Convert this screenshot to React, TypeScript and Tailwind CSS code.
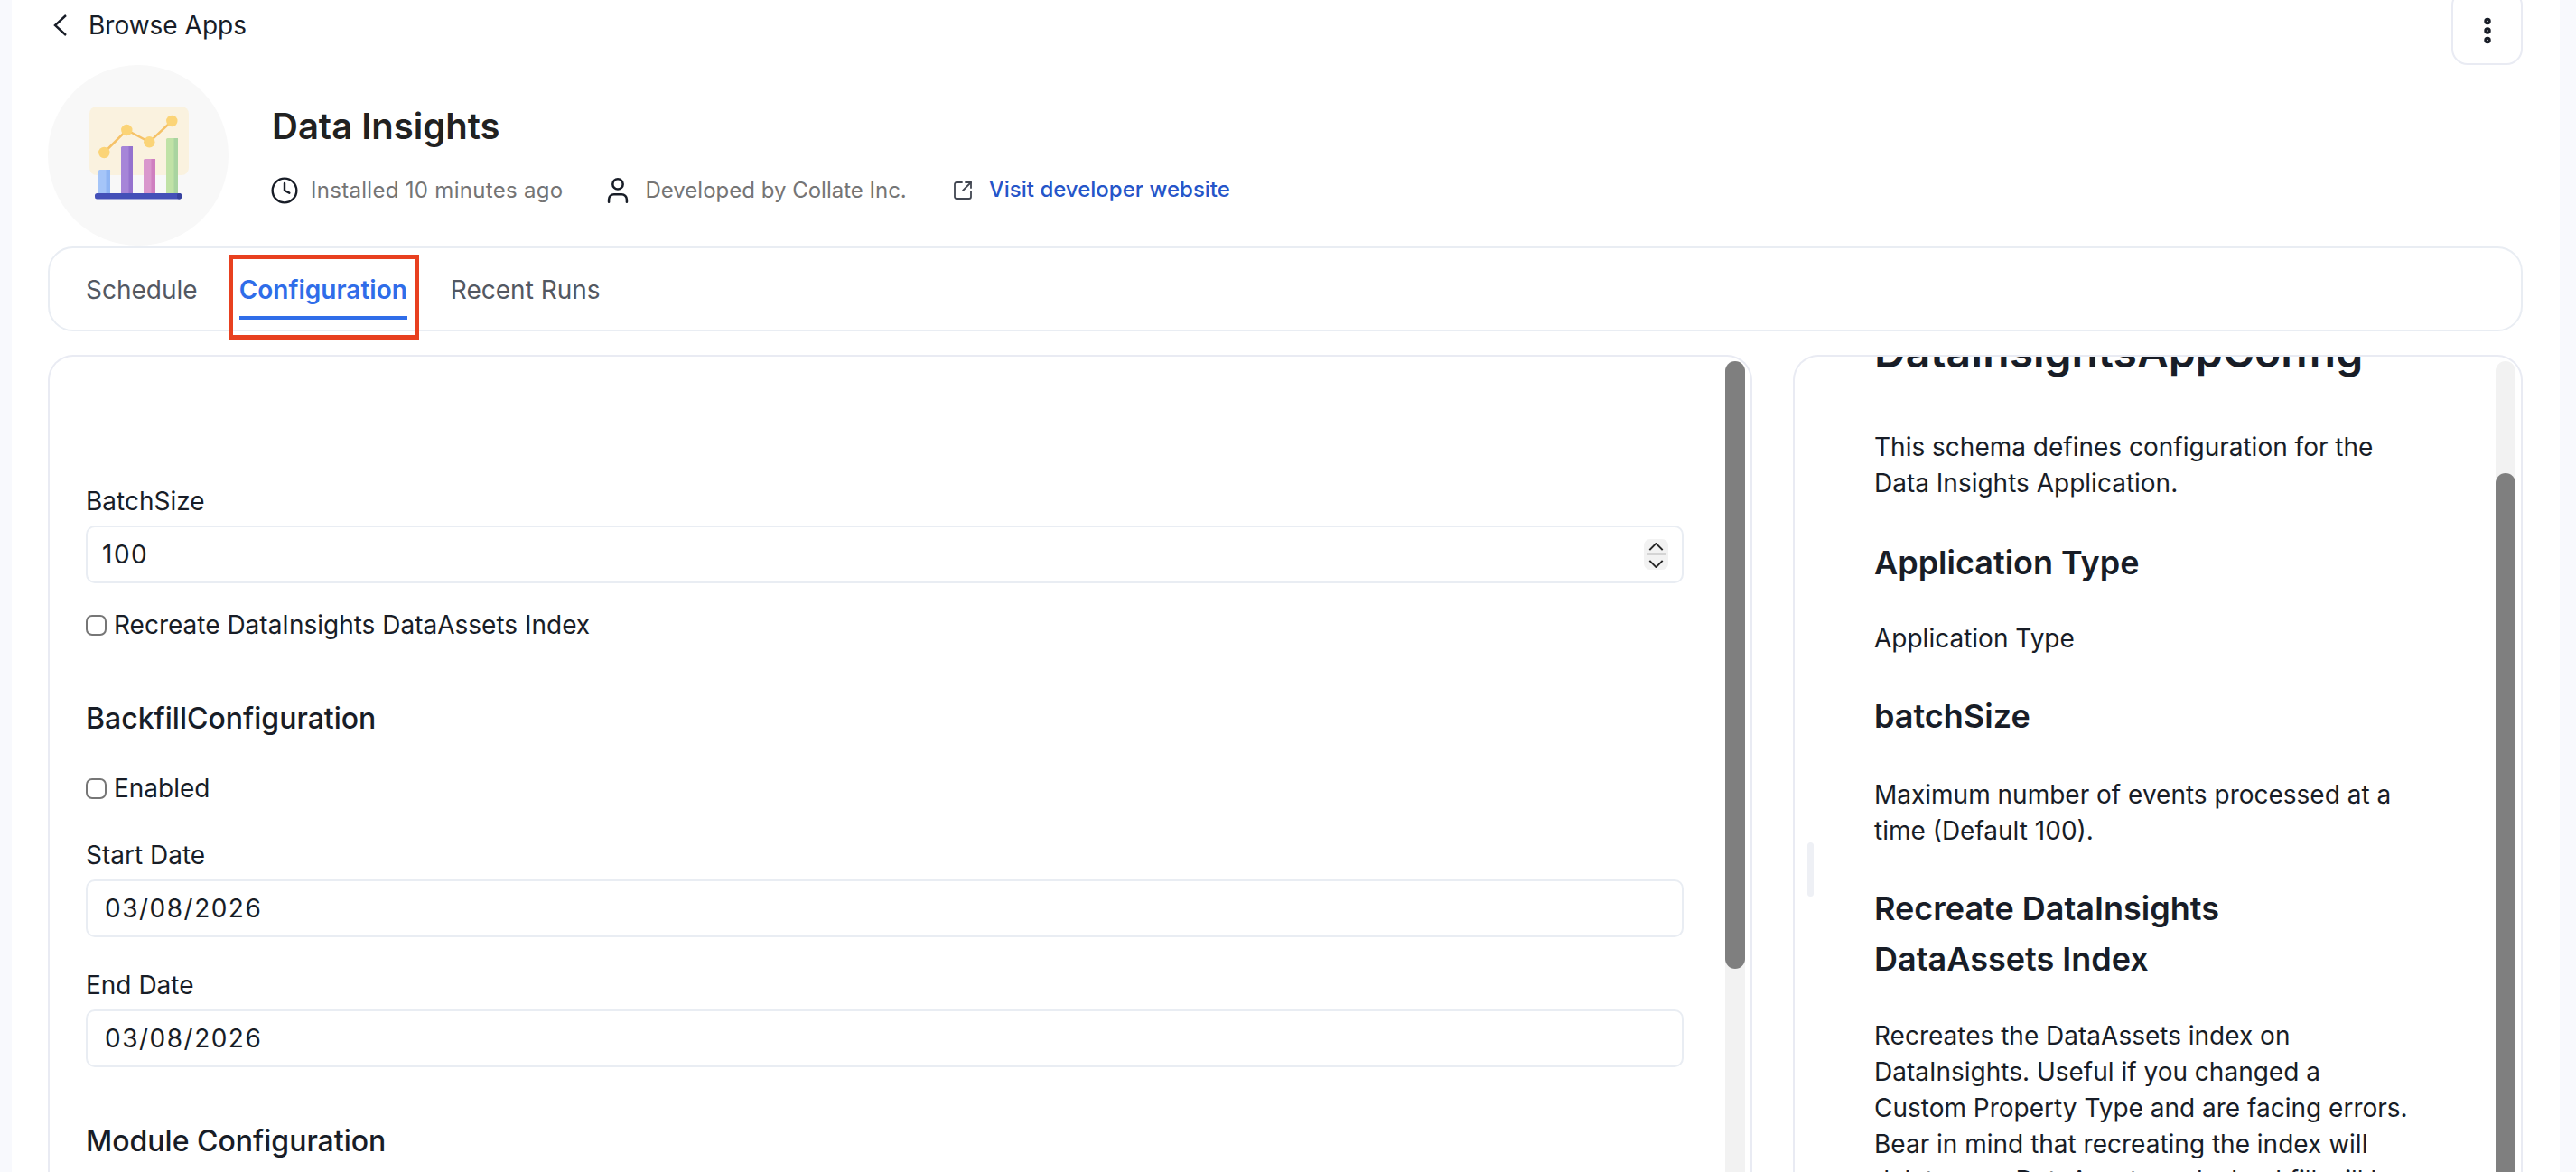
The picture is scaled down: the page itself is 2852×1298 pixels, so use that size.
import { Clock, EllipsisVertical, SquareArrowOutUpRight, User } from 'lucide-react'

const tabBase = 'relative flex h-full items-center pt-[2px] text-[28px] leading-[40px]'

const AppLogo = () => (
  <svg viewBox="0 0 200 200" className="h-[200px] w-[200px] shrink-0 rounded-full bg-[#f8f8f8]">
    <rect x="46" y="46" width="110" height="76" rx="8" fill="#faf2df" />
    <rect x="56" y="116" width="13" height="28" rx="1.5" fill="#a5c5f8" />
    <rect x="64.5" y="116" width="4.5" height="28" fill="#8fb5f3" />
    <rect x="81" y="90" width="13" height="54" rx="1.5" fill="#a685d8" />
    <rect x="89.5" y="90" width="4.5" height="54" fill="#9572ce" />
    <rect x="106" y="104" width="13" height="40" rx="1.5" fill="#d997cd" />
    <rect x="114.5" y="104" width="4.5" height="40" fill="#cf7fc0" />
    <rect x="131" y="81" width="13" height="63" rx="1.5" fill="#c0e2a6" />
    <rect x="139.5" y="81" width="4.5" height="63" fill="#a9d4a0" />
    <rect x="52" y="142" width="96" height="6.5" rx="2.5" fill="#4450b8" />
    <rect x="143" y="142" width="5" height="6.5" rx="2" fill="#37429f" />
    <polyline points="62.3,97 87.3,72 112.3,85.3 137.3,62" fill="none" stroke="#f5c268" strokeWidth="2.5" />
    <circle cx="62.3" cy="97" r="6.2" fill="#fbd477" />
    <circle cx="87.3" cy="72" r="6.2" fill="#fbd477" />
    <circle cx="112.3" cy="85.3" r="6.2" fill="#fbd477" />
    <circle cx="137.3" cy="62" r="6.2" fill="#fbd477" />
  </svg>
)

const Stepper = () => (
  <span className="flex h-[34px] w-[27px] flex-col items-center rounded-[7px] bg-[#f2f2f2] pt-[4px]">
    <svg viewBox="0 0 18 10" className="h-[9px] w-[17px]" fill="none" stroke="#262626" strokeWidth="2.2">
      <polyline points="1,9 9,1 17,9" />
    </svg>
    <span className="mt-[3px] h-[2px] w-[20px] bg-[#d4d4d4]" />
    <svg viewBox="0 0 18 10" className="mt-[5px] h-[9px] w-[17px]" fill="none" stroke="#262626" strokeWidth="2.2">
      <polyline points="1,1 9,9 17,1" />
    </svg>
  </span>
)

const Field = ({ label, value, stepper, mt }: { label: string; value: string; stepper?: boolean; mt: string }) => (
  <div className={mt}>
    <label className="block pt-[2px] text-[28px] leading-[38px] text-[#181d27]">{label}</label>
    <div className="mt-2 flex h-16 items-center justify-between rounded-[10px] border-2 border-[#e9edf3] bg-white pr-[15px]">
      <span className={`${stepper ? 'pl-[16px]' : 'pl-[19px]'} text-[28px] tracking-[1.5px] text-[#181d27]`}>{value}</span>
      {stepper && <Stepper />}
    </div>
  </div>
)

const Check = ({ label, mt }: { label: string; mt: string }) => (
  <label className={`flex h-10 items-center gap-[8px] text-[28px] text-[#181d27] ${mt}`}>
    <input type="checkbox" className="h-[23px] w-[23px] appearance-none rounded-[7px] border-2 border-[#767676] bg-white" />
    {label}
  </label>
)

const Scrollbar = ({ thumbTop, thumbHeight }: { thumbTop: string; thumbHeight: string }) => (
  <div className="absolute right-[6px] top-[5px] h-[1200px] w-[22px] rounded-t-full bg-[#f2f2f2]">
    <div className={`absolute left-0 w-[22px] rounded-full bg-[#7f7f7f] ${thumbTop} ${thumbHeight}`} />
  </div>
)

export default function App() {
  return (
    <div className="h-[1298px] overflow-hidden bg-[#f8f9fd] pl-[13px] pr-[18px] font-['Inter',sans-serif]">
      <div className="h-full bg-white pl-[40px] pr-[41px]">
        <div className="flex h-[72px] items-start justify-between">
          <div className="flex h-[56px] items-center gap-[22px] text-[28px] text-[#181d27]">
            <svg viewBox="0 0 18 26" className="ml-[5px] h-[26px] w-[18px]" fill="none" stroke="#181d27" strokeWidth="2.4">
              <polyline points="15,2 3,13 15,24" />
            </svg>
            Browse Apps
          </div>
          <button className="-mt-[12px] flex h-[84px] w-[79px] items-center justify-center rounded-[18px] border-2 border-[#e9ebf3] bg-white pt-[8px] text-[#181d27]">
            <EllipsisVertical size={36} strokeWidth={3} />
          </button>
        </div>

        <div className="flex h-[201px] gap-[48px]">
          <AppLogo />
          <div className="pt-[44px]">
            <h1 className="text-[40px] font-semibold leading-[48px] text-[#212121]">Data Insights</h1>
            <div className="mt-[23px] flex h-[48px] items-center text-[24px] text-[#757575]">
              <Clock size={32} strokeWidth={1.8} className="-ml-[2px] text-[#181d27]" />
              <span className="ml-[13px] tracking-[0.3px]">Installed 10 minutes ago</span>
              <User size={34} strokeWidth={1.8} className="ml-[44px] text-[#181d27]" />
              <span className="ml-[13px]">Developed by Collate Inc.</span>
              <SquareArrowOutUpRight size={24} strokeWidth={1.8} className="ml-[50px] text-[#414651]" />
              <a className="-mt-[3px] ml-[17px] font-medium text-[#2555c9]">Visit developer website</a>
            </div>
          </div>
        </div>

        <div className="flex h-[94px] gap-[48px] rounded-[28px] border-2 border-[#e9edf3] bg-white pl-[40px]">
          <div className={`${tabBase} text-[#535862]`}>Schedule</div>
          <div className={`${tabBase} -ml-[2px] font-semibold text-[#2f6de9]`}>
            Configuration
            <span className="absolute bottom-[11px] left-0 right-0 h-1 bg-[#2f6de9]" />
            <span className="absolute -bottom-[11px] -left-[12px] -right-[13px] top-[7px] border-[5px] border-[#e8401f]" />
          </div>
          <div className={`${tabBase} text-[#535862]`}>Recent Runs</div>
        </div>

        <div className="mt-[26px] flex gap-[45px]">
          <div className="relative h-[1000px] flex-1 overflow-hidden rounded-t-[28px] border-2 border-b-0 border-[#e9ebf3] pl-[40px] pr-[74px] pt-[139px]">
            <Scrollbar thumbTop="top-0" thumbHeight="h-[673px]" />
            <Field label="BatchSize" value="100" stepper mt="" />
            <Check label="Recreate DataInsights DataAssets Index" mt="mt-[26px]" />
            <h3 className="mt-[60px] text-[32px] font-medium leading-[48px] text-[#181d27]">BackfillConfiguration</h3>
            <Check label="Enabled" mt="mt-[33px]" />
            <Field label="Start Date" value="03/08/2026" mt="mt-[33px]" />
            <Field label="End Date" value="03/08/2026" mt="mt-[32px]" />
            <h3 className="mt-[58px] text-[32px] font-medium leading-[48px] text-[#181d27]">Module Configuration</h3>
          </div>

          <div className="relative h-[1000px] w-[808px] overflow-hidden rounded-t-[28px] border-2 border-b-0 border-[#e9ebf3] pl-[88px] text-[#181d27]">
            <Scrollbar thumbTop="top-[124px]" thumbHeight="h-[1076px]" />
            <div className="absolute left-[14px] top-[538px] h-[60px] w-[7px] rounded-full bg-[#eef0f5]" />
            <div className="-mt-[37px] w-[592px]">
              <h2 className="text-[48px] font-semibold leading-[64px]">DataInsightsAppConfig</h2>
              <p className="mt-[53px] text-[28px] leading-[40px]">
                This schema defines configuration for the Data Insights Application.
              </p>
              <h3 className="mt-[40px] text-[36px] font-semibold leading-[56px]">Application Type</h3>
              <p className="mt-[36px] text-[28px] leading-[40px]">Application Type</p>
              <h3 className="mt-[38px] text-[36px] font-semibold leading-[56px]">batchSize</h3>
              <p className="mt-[39px] text-[28px] leading-[40px]">
                Maximum number of events processed at a time (Default 100).
              </p>
              <h3 className="mt-[38px] max-w-[500px] text-[36px] font-semibold leading-[56px]">
                Recreate DataInsights DataAssets Index
              </h3>
              <p className="mt-[37px] text-[28px] leading-[40px]">
                Recreates the DataAssets index on DataInsights. Useful if you changed a Custom Property Type and are
                facing errors. Bear in mind that recreating the index will delete your DataAssets and a backfill will
                be needed.
              </p>
            </div>
          </div>
        </div>
      </div>
    </div>
  )
}
